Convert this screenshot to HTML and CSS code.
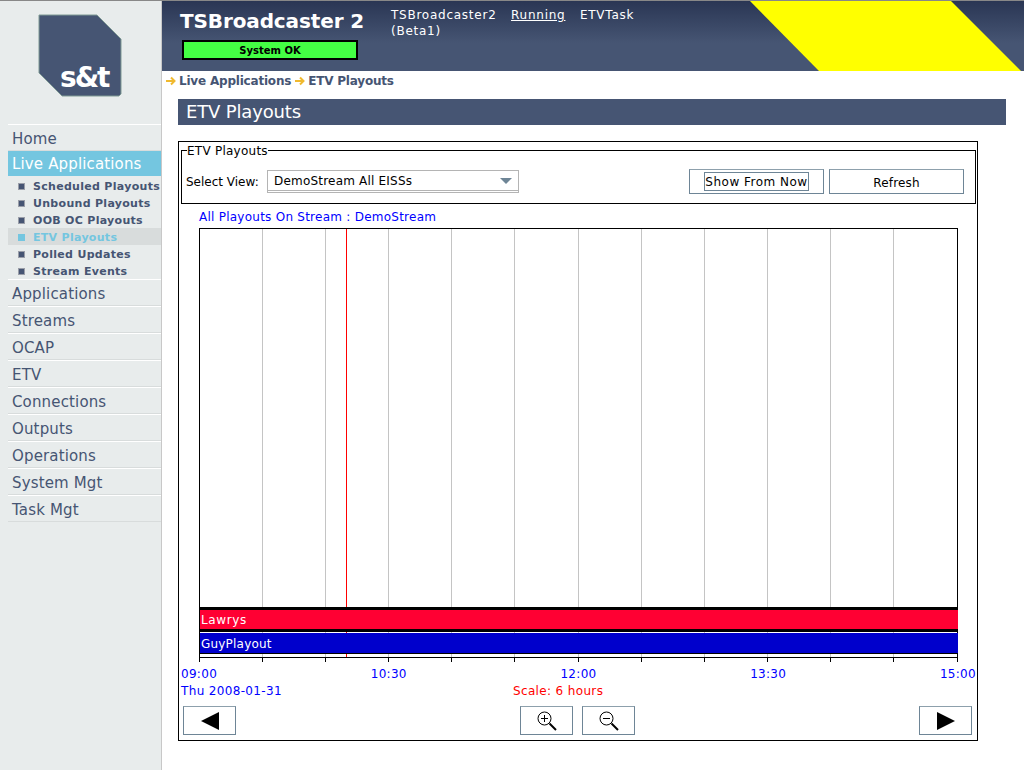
FILE: index.html
```html
<!DOCTYPE html>
<html lang="en">
<head>
  <meta charset="UTF-8" />
  <title>ETV Playouts - TSBroadcaster 2</title>
  <link rel="stylesheet" href="styles.css">
</head>
<body>
  <aside class="sidebar">
    <div class="logo">
      <svg width="86" height="84" viewBox="0 0 86 84">
        <polygon points="3,1 61,1 85,25 85,80 83,82 26,82 3,59" fill="#465573" stroke="#7f9a94"/>
        <text x="24" y="73" class="logo-text">s&amp;t</text>
      </svg>
    </div>
    <nav class="menu">
      <a href="#">Home</a>
      <a href="#" class="active">Live Applications</a>
      <ul class="submenu">
        <li>Scheduled Playouts</li>
        <li>Unbound Playouts</li>
        <li>OOB OC Playouts</li>
        <li class="current">ETV Playouts</li>
        <li>Polled Updates</li>
        <li>Stream Events</li>
      </ul>
      <a href="#">Applications</a>
      <a href="#">Streams</a>
      <a href="#">OCAP</a>
      <a href="#">ETV</a>
      <a href="#">Connections</a>
      <a href="#">Outputs</a>
      <a href="#">Operations</a>
      <a href="#">System Mgt</a>
      <a href="#">Task Mgt</a>
    </nav>
  </aside>

  <main class="content">
    <header class="banner">
      <div class="product">
        <h1>TSBroadcaster 2</h1>
        <div class="status">System OK</div>
      </div>
      <div class="server">
        <span>TSBroadcaster2<br>(Beta1)</span>
        <span class="running">Running</span>
        <span>ETVTask</span>
      </div>
      <svg class="stripe" width="274" height="70" viewBox="0 0 274 70">
        <polygon points="0,0 201,0 271,70 69,70" fill="#ffff00"/>
      </svg>
    </header>

    <div class="crumbs">
      <svg class="arrow" width="10" height="10" viewBox="0 0 10 10"><path d="M0 5H8M5 1.500L8.500 5L5 8.500" fill="none" stroke="#f0b92e" stroke-width="2"/></svg>
      <span>Live Applications</span>
      <svg class="arrow" width="10" height="10" viewBox="0 0 10 10"><path d="M0 5H8M5 1.500L8.500 5L5 8.500" fill="none" stroke="#f0b92e" stroke-width="2"/></svg>
      <span>ETV Playouts</span>
    </div>

    <h2 class="page-title">ETV Playouts</h2>

    <section class="panel">
      <fieldset class="view-box">
        <legend>ETV Playouts</legend>
        <div class="view-row">
          <label>Select View:</label>
          <div class="select"><span>DemoStream All EISSs</span><i class="select-arrow"></i></div>
          <div class="view-buttons">
            <button class="btn"><span class="focus">Show From Now</span></button>
            <button class="btn"><span class="btn-text">Refresh</span></button>
          </div>
        </div>
      </fieldset>

      <div class="chart-title">All Playouts On Stream : DemoStream</div>

      <div class="chart">
        <svg width="800" height="436" viewBox="0 0 800 436" class="chart-grid">
          <g stroke="#c4c4c4">
            <path d="M64.5 1V429M127.500 1V429M190.500 1V429M253.500 1V429M316.500 1V429M380.500 1V429M443.500 1V429M506.500 1V429M569.500 1V429M632.500 1V429M695.500 1V429"/>
          </g>
          <path d="M148.500 1V429" stroke="#ff0000"/>
          <rect x="1.500" y="0.500" width="758" height="429" fill="none" stroke="#000"/>
          <rect x="1" y="379" width="759" height="3" fill="#000"/>
          <rect x="2" y="382" width="758" height="19" fill="#ff0033"/>
          <rect x="1" y="401" width="759" height="3" fill="#000"/>
          <rect x="2" y="405" width="758" height="20" fill="#0000cc"/>
          <rect x="1" y="425" width="759" height="1" fill="#000"/>
          <path d="M1.500 429V434M64.500 429V434M127.500 429V434M190.500 429V434M253.500 429V434M316.500 429V434M380.500 429V434M443.500 429V434M506.500 429V434M569.500 429V434M632.500 429V434M695.500 429V434M759.500 429V434" stroke="#000"/>
        </svg>
        <span class="bar-label bar-red">Lawrys</span>
        <span class="bar-label bar-blue">GuyPlayout</span>
      </div>

      <div class="axis">
        <span>09:00</span><span>10:30</span><span>12:00</span><span>13:30</span><span>15:00</span>
      </div>
      <div class="scale-row">
        <span>Thu 2008-01-31</span>
        <span class="scale">Scale: 6 hours</span>
      </div>

      <div class="chart-nav">
        <button class="btn-icon">
          <svg width="20" height="18" viewBox="0 0 20 18"><polygon points="1,9 19,0 19,18" fill="#000"/></svg>
        </button>
        <div class="zoom-buttons">
          <button class="btn-icon">
            <svg width="22" height="22" viewBox="0 0 22 22" fill="none" stroke="#000"><circle cx="8.500" cy="8.500" r="6.500"/><path d="M5 8.500H12M8.500 5V12"/><path d="M13.500 13.500L20 20" stroke-width="2"/></svg>
          </button>
          <button class="btn-icon">
            <svg width="22" height="22" viewBox="0 0 22 22" fill="none" stroke="#000"><circle cx="8.500" cy="8.500" r="6.500"/><path d="M5 8.500H12"/><path d="M13.500 13.500L20 20" stroke-width="2"/></svg>
          </button>
        </div>
        <button class="btn-icon">
          <svg width="20" height="18" viewBox="0 0 20 18"><polygon points="1,0 19,9 1,18" fill="#000"/></svg>
        </button>
      </div>
    </section>
  </main>
</body>
</html>
```

FILE: styles.css
```css
body {
  margin: 0;
  display: flex;
  height: 770px;
  overflow: hidden;
  border-top: 1px solid #888;
  box-sizing: border-box;
  background-color: #fff;
  font-family: "DejaVu Sans", Verdana, sans-serif;
  font-size: 12px;
  color: #000;
}

.sidebar {
  flex: none;
  width: 153px;
  padding-left: 8px;
  background-color: #e8ecec;
  border-right: 1px solid #c8c8c8;
}

.logo {
  height: 123px;
  padding: 13px 0 0 28px;
  box-sizing: border-box;
}

.logo-text {
  font-family: "DejaVu Sans", sans-serif;
  font-weight: bold;
  font-size: 28px;
  letter-spacing: -2px;
  fill: #fff;
}

.menu a {
  display: block;
  height: 25px;
  line-height: 29px;
  padding-left: 4px;
  font-size: 15px;
  letter-spacing: 0.15px;
  color: #465573;
  text-decoration: none;
  border-top: 1px solid #fff;
  border-bottom: 1px solid #d8dcdc;
}

.menu a.active {
  background-color: #74c6e0;
  color: #fff;
  border: 0;
  line-height: 27px;
}

.submenu {
  list-style: none;
  margin: 0;
  padding: 1px 0 0;
}

.submenu li {
  position: relative;
  height: 17px;
  line-height: 19px;
  padding-left: 25px;
  font-size: 11px;
  font-weight: bold;
  letter-spacing: 0.3px;
  color: #465573;
  white-space: nowrap;
}

.submenu li::before {
  content: "";
  position: absolute;
  left: 10px;
  top: 6px;
  width: 5px;
  height: 5px;
  background-color: #465573;
  border: 1px solid #9a9ea8;
}

.submenu li.current {
  background-color: #d8dcdc;
  color: #74c6e0;
}

.submenu li.current::before {
  background-color: #74c6e0;
  border-color: #74c6e0;
}

.content {
  flex: 1;
  min-width: 0;
}

.banner {
  position: relative;
  display: flex;
  height: 70px;
  background: linear-gradient(#2a3654, #465573 60%);
  color: #fff;
}

.product {
  width: 229px;
  padding: 8px 0 0 18px;
  box-sizing: border-box;
}

.product h1 {
  margin: 0;
  font-size: 20px;
  letter-spacing: -0.12px;
  line-height: 24px;
  white-space: nowrap;
}

.status {
  width: 172px;
  height: 16px;
  margin: 7px 0 0 2px;
  border: 2px solid #000;
  background-color: #44ff44;
  color: #000;
  font-size: 10px;
  font-weight: bold;
  line-height: 18px;
  text-align: center;
}

.server {
  display: flex;
  gap: 14.500px;
  padding-top: 6px;
  line-height: 16px;
  letter-spacing: 0.75px;
}

.running {
  text-decoration: underline;
}

.stripe {
  position: absolute;
  top: 0;
  left: 588px;
}

.crumbs {
  display: flex;
  align-items: center;
  height: 20px;
  margin-bottom: 8px;
  padding-left: 4px;
  font-size: 12px;
  font-weight: bold;
  letter-spacing: -0.2px;
  color: #465573;
}

.arrow {
  flex: none;
  margin-right: 3px;
}

.crumbs span {
  margin-right: 4px;
}

.page-title {
  margin: 0 18px 0 16px;
  height: 26px;
  padding-left: 8px;
  line-height: 26px;
  font-size: 18px;
  letter-spacing: -0.15px;
  font-weight: normal;
  color: #fff;
  background-color: #465573;
}

.panel {
  width: 798px;
  height: 597px;
  margin: 16px 0 0 16px;
  border: 1px solid #000;
  padding-top: 1px;
}

.view-box {
  margin: 0 1px 0 2px;
  padding: 0 4px;
  height: 61px;
  border: 1px solid #000;
  box-sizing: border-box;
}

.view-box legend {
  padding: 0;
  margin-left: 1px;
  font-size: 12px;
  line-height: 16px;
  height: 14px;
  letter-spacing: 0.25px;
}

.view-row {
  display: flex;
  align-items: center;
  padding-top: 12px;
}

.view-row label {
  width: 81px;
  padding-top: 1px;
  white-space: nowrap;
}

.select {
  display: flex;
  align-items: center;
  justify-content: space-between;
  width: 252px;
  height: 23px;
  padding: 1px 6px 0;
  box-sizing: border-box;
  border: 1px solid #b4b4b4;
  border-bottom: 3px double #b4b4b4;
  letter-spacing: 0.2px;
}

.select-arrow {
  border: 6px solid transparent;
  border-top: 6px solid #6e8596;
  border-bottom: 0;
}

.view-buttons {
  display: flex;
  gap: 5px;
  margin-left: 170px;
}

.btn, .btn-icon {
  background: #fff;
  border: 1px solid #6e8596;
  border-top-color: #8da0ac;
  padding: 0;
  font-family: inherit;
  color: #000;
}

.btn {
  width: 135px;
  height: 25px;
  font-size: 12px;
  letter-spacing: 0.2px;
}

.btn-text {
  display: block;
  padding-top: 2px;
}

.focus {
  display: inline-block;
  width: 103px;
  height: 17px;
  line-height: 19px;
  border: 1px solid #6e8596;
  letter-spacing: 0.5px;
  white-space: nowrap;
}

.chart-title {
  margin: 6px 0 3px 20px;
  line-height: 15px;
  letter-spacing: 0.25px;
  color: #0000ff;
}

.chart {
  position: relative;
  height: 436px;
  margin-left: 19px;
}

.chart-grid {
  display: block;
}

.bar-label {
  position: absolute;
  left: 3px;
  font-size: 12px;
  line-height: 15px;
  color: #fff;
}

.bar-red {
  top: 385px;
  letter-spacing: 0.6px;
}

.bar-blue {
  top: 409px;
  letter-spacing: 0.2px;
}

.axis {
  display: flex;
  justify-content: space-between;
  margin: 3px 0 0 2px;
  width: 795px;
  line-height: 15px;
  letter-spacing: 0.3px;
  color: #0000ff;
}

.scale-row {
  position: relative;
  margin: 2px 0 0 2px;
  line-height: 15px;
  letter-spacing: 0.35px;
  color: #0000ff;
}

.scale {
  position: absolute;
  left: 332px;
  color: #ff0000;
}

.chart-nav {
  display: flex;
  justify-content: space-between;
  margin: 7px 5px 0 4px;
}

.zoom-buttons {
  display: flex;
  gap: 9px;
}

.btn-icon {
  display: flex;
  align-items: center;
  justify-content: center;
  width: 53px;
  height: 29px;
}
```
